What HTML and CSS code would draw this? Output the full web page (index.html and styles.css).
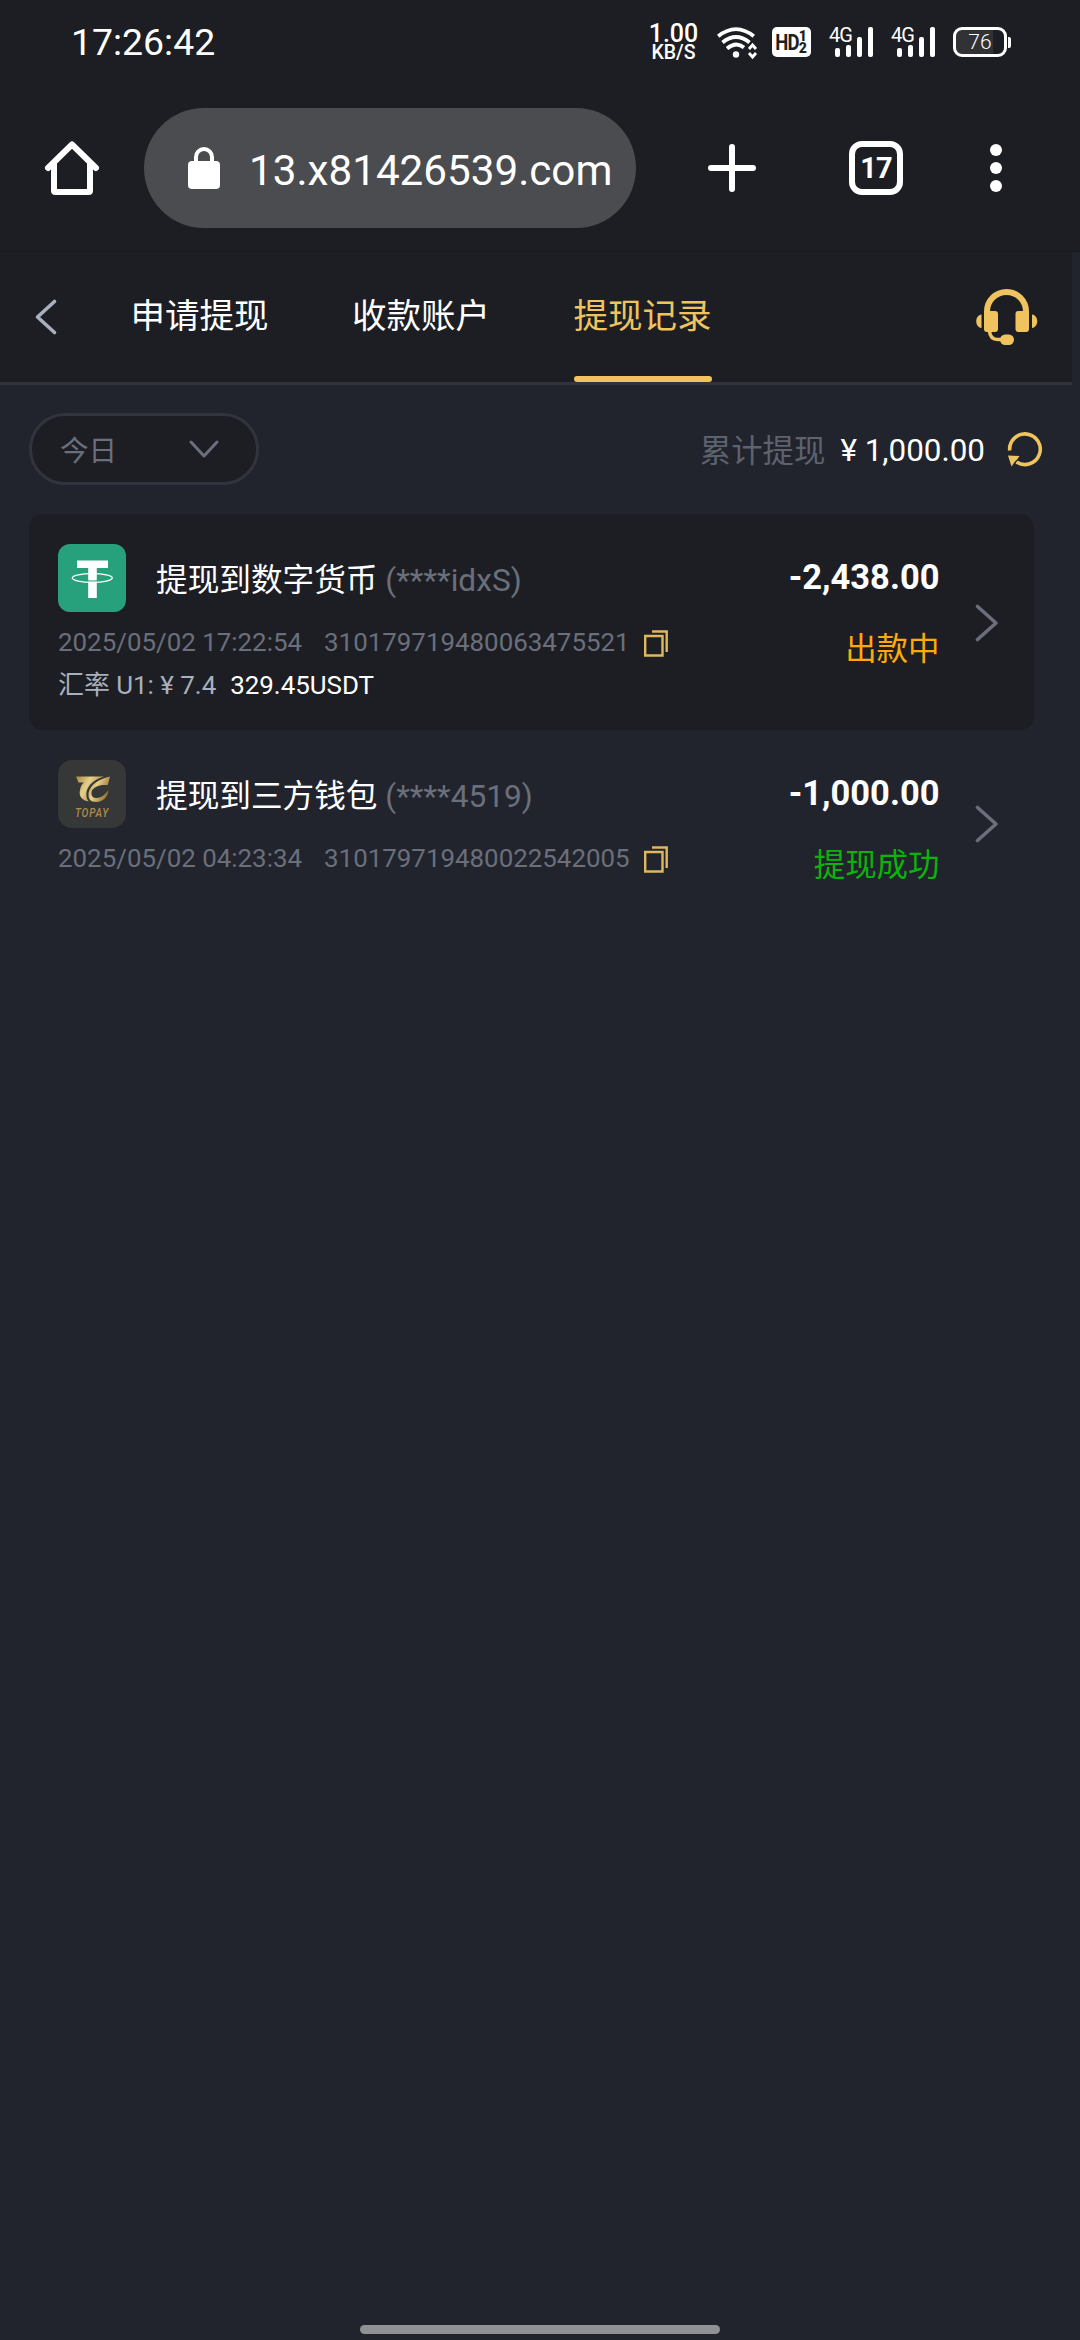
FILE: index.html
```html
<!DOCTYPE html>
<html lang="zh-CN">
<head>
<meta charset="utf-8">
<title>提现记录</title>
<link rel="stylesheet" href="styles.css">
</head>
<body>
<header class="status-bar">
  <span class="clock">17:26:42</span>
  <div class="speed"><span class="speed-value">1.00</span><span class="speed-unit">KB/S</span></div>
  <svg class="wifi" viewBox="0 0 40 31" width="40" height="31" fill="none" stroke="#fff" stroke-width="3.8">
    <path d="M1.2 9.2Q19 -5 36.800 9.200M5.500 15.500Q19 4.500 32.500 15.500M10 21.500Q19 14 27 20.500"/>
    <circle cx="19" cy="27.500" r="3.200" fill="#fff" stroke="none"/>
    <path d="M32 22l3.500-4 3.500 4M32 26l3.500 4 3.500-4" stroke-width="2.800"/>
  </svg>
  <div class="hd"><b>HD</b><span class="hd-num"><i>1</i><i>2</i></span></div>
  <div class="signal"><span>4G</span><svg viewBox="0 0 45 30" width="45" height="30" fill="#fff"><rect x="6" y="21" width="5" height="9" rx="2"/><rect x="17" y="18" width="5" height="12" rx="2"/><rect x="28" y="10" width="5" height="20" rx="2"/><rect x="39" y="0" width="5" height="30" rx="2"/></svg></div>
  <div class="signal"><span>4G</span><svg viewBox="0 0 45 30" width="45" height="30" fill="#fff"><rect x="6" y="21" width="5" height="9" rx="2"/><rect x="17" y="18" width="5" height="12" rx="2"/><rect x="28" y="10" width="5" height="20" rx="2"/><rect x="39" y="0" width="5" height="30" rx="2"/></svg></div>
  <div class="battery"><span>76</span></div><i class="battery-tip"></i>
</header>
<nav class="browser-bar">
  <svg class="home" viewBox="0 0 54 54" width="54" height="54" fill="none" stroke="#fff" stroke-width="6" stroke-linecap="round" stroke-linejoin="round"><path d="M3 27L27 3.500L51 27M9 23V49.500Q9 51 10.500 51H43.500Q45 51 45 49.500V23"/></svg>
  <div class="address">
    <svg viewBox="0 0 32 42" width="32" height="42"><path d="M8 16V10a8 8 0 0 1 16 0V16" fill="none" stroke="#fff" stroke-width="4"/><rect y="14" width="32" height="28" rx="4" fill="#fff"/></svg>
    <span>13.x81426539.com</span>
  </div>
  <svg class="plus" viewBox="0 0 48 48" width="48" height="48" stroke="#fff" stroke-width="6" stroke-linecap="round"><path d="M24 3V45M3 24H45"/></svg>
  <div class="tab-count">17</div>
  <svg class="dots" viewBox="0 0 12 48" width="12" height="48" fill="#fff"><circle cx="6" cy="6" r="6"/><circle cx="6" cy="24" r="6"/><circle cx="6" cy="42" r="6"/></svg>
</nav>
<main class="page">
  <div class="top-tabs">
    <svg class="back" viewBox="0 0 22 36" width="22" height="36" fill="none" stroke="#a9b0bd" stroke-width="3.600" stroke-linecap="round" stroke-linejoin="round"><path d="M19.500 2.500L2.500 18L19.500 33.500"/></svg>
    <span class="tab">申请提现</span><span class="tab">收款账户</span><span class="tab active">提现记录</span>
    <svg class="headset" viewBox="0 0 62 56" width="62" height="56" fill="#efc45f">
      <path d="M11 25V22.500A19.500 19.500 0 0 1 50 22.500V25" fill="none" stroke="#efc45f" stroke-width="6"/>
      <rect x="8" y="22" width="14" height="21" rx="3"/><rect x="39.500" y="22" width="13.500" height="21" rx="3"/>
      <path d="M5.500 25.500V39C-1.500 38-1.500 26.500 5.500 25.500ZM56 25.500V39C63 38 63 26.500 56 25.500Z"/>
      <path d="M13.500 42Q14 50.500 22 50.500H28" fill="none" stroke="#efc45f" stroke-width="3.600"/><rect x="24" y="45.500" width="14" height="10.500" rx="5.200"/>
    </svg>
  </div>
  <div class="filter-row">
    <div class="select"><span>今日</span><svg viewBox="0 0 30 18" width="30" height="18" fill="none" stroke="#6a6f7b" stroke-width="3" stroke-linecap="round" stroke-linejoin="round"><path d="M2 2L15 16L28 2"/></svg></div>
    <div class="total"><span class="muted">累计提现</span><span class="sum">¥ 1,000.00</span>
      <svg viewBox="0 0 36 36" width="36" height="36"><path d="M2.700 19.500A15.300 15.300 0 1 1 9.500 31" fill="none" stroke="#efc45f" stroke-width="3.600"/><path d="M1 24.500L12.500 25L10.500 28L8 30.500L4.500 35.500Z" fill="#efc45f"/></svg>
    </div>
  </div>
  <section class="record dark">
    <svg class="logo" viewBox="0 0 68 68" width="68" height="68"><rect width="68" height="68" rx="12" fill="#26a17b"/><path d="M19 16.500H50V24H38.800V54H30.200V24H19Z" fill="#fff"/><ellipse cx="34.300" cy="34" rx="20" ry="4.300" fill="none" stroke="#fff" stroke-width="1.300"/><path d="M30 36.800Q34 37.200 39 36.800" stroke="#26a17b" stroke-width="1" fill="none"/></svg>
    <h2 class="title">提现到数字货币 <span>(****idxS)</span></h2>
    <strong class="amount">-2,438.00</strong>
    <p class="meta"><span>2025/05/02 17:22:54</span><span class="order">310179719480063475521</span>
      <svg viewBox="0 0 24 27" width="24" height="27" fill="none" stroke="#e0b75c" stroke-width="2.400"><path d="M1.200 6H18.500V25.500H1.200ZM8 1.500H22.700V22"/></svg></p>
    <span class="state pending">出款中</span>
    <p class="rate">汇率 U1: ¥ 7.4<b>329.45USDT</b></p>
    <svg class="arrow" viewBox="0 0 24 38" width="24" height="38" fill="none" stroke="#6a6f7b" stroke-width="3.600" stroke-linecap="round" stroke-linejoin="round"><path d="M2.500 2.500L21 19L2.500 35.500"/></svg>
  </section>
  <section class="record short">
    <svg class="logo" viewBox="0 0 68 68" width="68" height="68">
      <defs><linearGradient id="gold" x1="0" y1="0" x2="1" y2="0.500"><stop offset="0" stop-color="#a98542"/><stop offset=".45" stop-color="#e6d08a"/><stop offset="1" stop-color="#96702f"/></linearGradient></defs>
      <rect width="68" height="68" rx="14" fill="#363737"/>
      <path d="M18 16.500H46C36 19 29.500 26 28.500 32C28 37 29 39.500 31 41.500C24 40.500 20.500 36 22 30C22.800 26 24 24 26 22.500H20.500Z" fill="url(#gold)"/>
      <path d="M52 16.500L49.800 25H44Q35 26.500 33.500 32Q33 38.500 39 38Q46 37 50.500 30Q49 41.500 38 42Q29.500 42 30.500 33Q33 21 52 16.500Z" fill="url(#gold)"/>
      <text transform="translate(17 57) scale(.78 1)" class="logo-text">TOPAY</text></svg>
    <h2 class="title">提现到三方钱包 <span>(****4519)</span></h2>
    <strong class="amount">-1,000.00</strong>
    <p class="meta"><span>2025/05/02 04:23:34</span><span class="order">310179719480022542005</span>
      <svg viewBox="0 0 24 27" width="24" height="27" fill="none" stroke="#e0b75c" stroke-width="2.400"><path d="M1.200 6H18.500V25.500H1.200ZM8 1.500H22.700V22"/></svg></p>
    <span class="state success">提现成功</span>
    <svg class="arrow" viewBox="0 0 24 38" width="24" height="38" fill="none" stroke="#6a6f7b" stroke-width="3.600" stroke-linecap="round" stroke-linejoin="round"><path d="M2.500 2.500L21 19L2.500 35.500"/></svg>
  </section>
</main>
<footer class="gesture"><i></i></footer>
</body>
</html>
```
FILE: styles.css
```css
* { box-sizing: border-box; }
body { margin: 0; width: 1080px; height: 2340px; display: flex; flex-direction: column; overflow: hidden; background: #21242c; color: #fff; font-family: Roboto, "Noto Sans CJK SC", sans-serif; }
svg { display: block; flex: none; overflow: visible; }
i { font-style: normal; }
h2, p { margin: 0; font-weight: 400; }

.status-bar { height: 84px; display: flex; align-items: center; padding-left: 71px; background: #1d1e23; }
.clock { font-size: 37.400px; width: 578px; line-height: 82px; }
.speed { width: 49px; display: flex; flex-direction: column; align-items: center; font-weight: 500; }
.speed-value { font-size: 25px; line-height: 22px; }
.speed-unit { font-size: 19.500px; line-height: 16px; }
.wifi { margin-left: 19px; }
.hd { margin-left: 15px; width: 39px; height: 30px; border-radius: 5px; background: #fff; color: #1d1e23; display: flex; justify-content: center; align-items: center; }
.hd b { font-size: 22px; letter-spacing: -1px; transform: scaleX(.84); margin: 0 -2px 0 -3px; }
.hd-num { display: flex; flex-direction: column; font-size: 14px; line-height: 12px; font-weight: 900; }
.signal { margin-left: 18px; width: 44px; height: 30px; display: grid; }
.signal span, .signal svg { grid-area: 1 / 1; }
.signal span { font-size: 20px; line-height: 16px; letter-spacing: -1px; }
.battery { margin-left: 18px; width: 54px; height: 30px; border: 3px solid #fff; border-radius: 9px; background: linear-gradient(90deg, #313236 37px, transparent 37px); display: grid; place-items: center; }
.battery span { font-size: 21px; line-height: 24px; font-weight: 300; }
.battery-tip { width: 3px; height: 11px; margin-left: 1px; border-radius: 0 2px 2px 0; background: #fff; }

.browser-bar { height: 168px; padding: 0 78px 0 45px; display: flex; align-items: center; background: #1d1e23; border-bottom: 1px solid #191a1e; }
.address { margin-left: 45px; width: 492px; height: 120px; padding-left: 44px; border-radius: 60px; background: #4b4c4f; display: flex; align-items: center; }
.address span { margin-left: 29px; font-size: 42.200px; line-height: 60px; padding-top: 6px; }
.plus { margin-left: 72px; }
.tab-count { margin-left: 93px; width: 54px; height: 54px; border: 6px solid #fff; border-radius: 13px; display: grid; place-items: center; font-size: 29px; font-weight: 700; letter-spacing: -1px; }
.dots { margin-left: 87px; }

.page { flex: 1; display: flex; flex-direction: column; }
.top-tabs { width: 1072px; height: 133px; padding-left: 35px; display: flex; align-items: center; background: #1d1e23; border-bottom: 3px solid #31343e; }
.back { margin-right: 73.500px; }
.tab { height: 130px; margin-right: 83.500px; font-size: 34.500px; line-height: 128px; }
.tab.active { margin-right: 0; color: #efc45f; display: grid; grid-template-rows: 124px 6px; }
.tab.active::after { content: ""; height: 6px; border-radius: 3px; background: #efc45f; }
.headset { margin-left: 264px; }

.filter-row { height: 129px; padding: 0 37px 2px 29px; display: flex; align-items: center; justify-content: space-between; }
.select { width: 230px; height: 72px; padding: 0 37px 0 28px; border: 3px solid #31343e; border-radius: 36px; background: #1d1e23; display: flex; align-items: center; justify-content: space-between; color: #6a6f7b; font-size: 28.600px; }
.total { display: flex; align-items: center; font-size: 31.400px; }
.muted { color: #5d626e; }
.sum { margin-left: 15px; margin-right: 22px; padding-top: 3px; }

.record { width: 1005px; height: 216px; margin-left: 29px; padding: 30px 30px 0 29px; border-radius: 14px; display: grid; grid-template-columns: 98px 1fr 170px 64.500px; grid-template-rows: 68px 62px 1fr; }
.record.dark { background: #1d1e23; }
.record.short { height: 186px; }
.title { grid-area: 1 / 2; font-size: 31.650px; line-height: 73px; white-space: pre; }
.title span { color: #6a6f7b; }
.amount { grid-area: 1 / 3; font-size: 34.500px; line-height: 66px; text-align: right; }
.meta { grid-area: 2 / 1 / 3 / 3; display: flex; align-items: center; padding-bottom: 2px; color: #6a6f7b; font-size: 25.900px; }
.order { width: 306px; margin-left: 22px; }
.meta svg { margin: 2px 0 0 14px; }
.state { grid-area: 2 / 3; font-size: 31.450px; line-height: 76px; text-align: right; }
.pending { color: #ffaa09; }
.success { color: #0bb30b; }
.rate { grid-area: 3 / 1 / 4 / 3; color: #a9b0bd; font-size: 25.900px; line-height: 23px; }
.rate b { margin-left: 14px; color: #fff; font-weight: 400; }
.arrow { grid-area: 1 / 4 / 4 / 5; justify-self: end; align-self: center; margin: 0 5px 29px 0; }
.logo-text { font: italic 500 13px "Roboto", sans-serif; letter-spacing: 1px; fill: #b08c4c; }

.gesture { height: 15px; display: flex; justify-content: center; }
.gesture i { width: 360px; height: 9px; border-radius: 5px; background: #909194; }
```
